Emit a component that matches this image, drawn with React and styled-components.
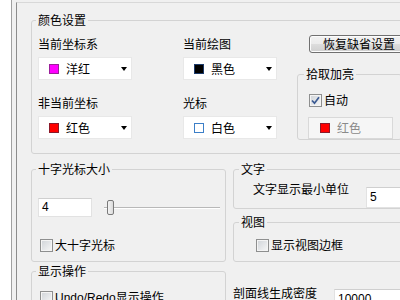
import React from 'react';
import styled, { createGlobalStyle } from 'styled-components';

const GlobalStyle = createGlobalStyle`
  html, body {
    margin: 0;
    padding: 0;
  }
  body {
    background: #f0f0f0;
    font-family: "Noto Sans CJK SC", "Liberation Sans", sans-serif;
    font-size: 12px;
    color: #000;
  }
`;

const Window = styled.div`
  display: flex;
  width: 400px;
  height: 300px;
  overflow: hidden;
  background: #f0f0f0;
`;

const SideList = styled.div`
  flex: none;
  width: 11px;
  background: #fff;
  border-right: 1px solid #a0a0a0;
`;

const Page = styled.div`
  flex: none;
  display: flex;
  flex-direction: column;
  width: 460px;
  margin: 2px 0 0 4px;
  padding: 10px 0 0 14px;
  border-left: 1px solid #8c8c8c;
  border-top: 1px solid #d8d8d8;
  box-sizing: border-box;
`;

const Group = styled.fieldset`
  flex: none;
  margin: 0;
  padding: 0;
  min-width: 0;
  box-sizing: border-box;
  width: ${(p) => p.$w}px;
  height: ${(p) => p.$h}px;
  border: 1px solid #d3d3d3;
  border-radius: 3px;
`;

const Legend = styled.legend`
  margin-left: ${(p) => p.$indent ?? 4}px;
  padding: 0 2px;
  font-size: 12px;
  line-height: 14px;
`;

const ColorBody = styled.div`
  display: flex;
  padding: 10px 0 0 6px;
`;

const Column = styled.div`
  display: flex;
  flex-direction: column;
  gap: 16px;
  width: 94px;
  margin-left: ${(p) => p.$offset || 0}px;
`;

const FieldLabel = styled.div`
  line-height: 14px;
  margin-bottom: 6px;
  white-space: nowrap;
`;

const Dropdown = styled.div`
  display: flex;
  align-items: center;
  box-sizing: border-box;
  width: ${(p) => p.$w || 94}px;
  height: ${(p) => p.$h || 23}px;
  padding-left: ${(p) => p.$pad || 10}px;
  margin-left: ${(p) => p.$shift || 0}px;
  background: ${(p) => (p.$disabled ? '#f6f6f6' : '#fff')};
  border: 1px solid ${(p) => (p.$disabled ? '#d9d9d9' : '#e8e8e8')};
  color: ${(p) => (p.$disabled ? '#8a8a8a' : '#000')};
`;

const Swatch = styled.span`
  flex: none;
  width: 10px;
  height: 10px;
  box-sizing: border-box;
  background: ${(p) => p.$fill};
  border: 1px solid ${(p) => p.$edge};
`;

const SwatchText = styled.span`
  margin-left: 7px;
  line-height: 14px;
`;

const Arrow = styled.span`
  margin-left: auto;
  margin-right: 4px;
  width: 0;
  height: 0;
  border-left: 3.5px solid transparent;
  border-right: 3.5px solid transparent;
  border-top: 4px solid #000;
`;

const PickColumn = styled.div`
  display: flex;
  flex-direction: column;
  margin-left: 20px;
`;

const Button = styled.div`
  box-sizing: border-box;
  width: 100px;
  height: 18px;
  margin: -2px 0 0 12px;
  padding-left: 13px;
  border: 1px solid #707070;
  border-radius: 3px;
  background: linear-gradient(#f2f2f2 0%, #ebebeb 50%, #dddddd 51%, #cfcfcf 100%);
  box-shadow: inset 0 0 0 1px #fcfcfc;
  line-height: 16px;
  white-space: nowrap;
`;

const PickBody = styled.div`
  display: flex;
  flex-direction: column;
  gap: 10px;
  padding: 12px 0 0 11px;
`;

const CheckRow = styled.label`
  display: flex;
  align-items: center;
  gap: 2px;
  padding-left: ${(p) => p.$pad || 0}px;
  margin-top: ${(p) => p.$top || 0}px;
  line-height: 14px;
  white-space: nowrap;
`;

const Box = styled.span`
  display: inline-flex;
  align-items: center;
  justify-content: center;
  flex: none;
  width: 13px;
  height: 13px;
  box-sizing: border-box;
  border: 1px solid #8e8f8f;
  background: linear-gradient(135deg, #cfd3d8, #f7f7f7);
  box-shadow: inset 0 0 0 1px #f4f4f4;
`;

const Latin = styled.span`
  font-family: "Liberation Sans", "Noto Sans CJK SC", sans-serif;
`;

const Row = styled.div`
  display: flex;
  margin-top: ${(p) => p.$top || 0}px;
`;

const SideColumn = styled.div`
  display: flex;
  flex-direction: column;
  gap: 6px;
  margin-left: 7px;
`;

const CrossBody = styled.div`
  display: flex;
  flex-direction: column;
  padding: 22px 0 0 6px;
`;

const SizeRow = styled.div`
  display: flex;
  align-items: center;
`;

const TextBox = styled.div`
  box-sizing: border-box;
  width: ${(p) => p.$w}px;
  height: ${(p) => p.$h}px;
  padding-left: 3px;
  background: #fff;
  border: 1px solid #e2e2e2;
  border-top-color: #cfcfcf;
  font-family: "Liberation Sans", sans-serif;
  font-size: 12px;
  line-height: ${(p) => p.$h - 2}px;
  flex: none;
`;

const Slider = styled.div`
  position: relative;
  width: 116px;
  height: 16px;
  margin-left: 12px;
`;

const Track = styled.div`
  position: absolute;
  left: 0;
  right: 0;
  top: 7px;
  border-top: 1px solid #b8b8b8;
  border-bottom: 1px solid #fff;
`;

const Thumb = styled.div`
  position: absolute;
  left: 3px;
  top: 0;
  width: 7px;
  height: 15px;
  box-sizing: border-box;
  border: 1px solid #7a7a7a;
  border-radius: 2px;
  background: linear-gradient(90deg, #f4f4f4, #dadada);
`;

const TextBody = styled.div`
  display: flex;
  align-items: flex-start;
  padding: 6px 0 0 19px;
`;

const InlineLabel = styled.span`
  line-height: 14px;
  white-space: nowrap;
`;

const ViewBody = styled.div`
  padding-top: 9px;
`;

const DensityPane = styled.div`
  display: flex;
  align-items: flex-start;
  margin-left: 7px;
  padding-top: 22px;
`;

const colors = {
  magenta: ['#ff00ff', '#9a209a'],
  black: ['#000000', '#1c3a6a'],
  red: ['#ff0000', '#8a1a2a'],
  white: ['#ffffff', '#3c7fc8'],
};

const ColorField = ({ label, color, text }) => (
  <div>
    <FieldLabel>{label}</FieldLabel>
    <Dropdown>
      <Swatch $fill={colors[color][0]} $edge={colors[color][1]} />
      <SwatchText>{text}</SwatchText>
      <Arrow />
    </Dropdown>
  </div>
);

const CheckBox = ({ checked }) => (
  <Box>
    {checked && (
      <svg width="9" height="9" viewBox="0 0 9 9">
        <path d="M1 4.5 L3.5 7.2 L8 1.2" fill="none" stroke="#3b5a92" strokeWidth="1.7" />
      </svg>
    )}
  </Box>
);

export default function App() {
  return (
    <Window>
      <GlobalStyle />
      <SideList />
      <Page>
        <Group $w={400} $h={141}>
          <Legend>颜色设置</Legend>
          <ColorBody>
            <Column>
              <ColorField label="当前坐标系" color="magenta" text="洋红" />
              <ColorField label="非当前坐标" color="red" text="红色" />
            </Column>
            <Column $offset={51}>
              <ColorField label="当前绘图" color="black" text="黑色" />
              <ColorField label="光标" color="white" text="白色" />
            </Column>
            <PickColumn>
              <Button>恢复缺省设置</Button>
              <Group $w={105} $h={73} style={{ marginTop: 14 }}>
                <Legend $indent={6}>拾取加亮</Legend>
                <PickBody>
                  <CheckRow>
                    <CheckBox checked />
                    自动
                  </CheckRow>
                  <Dropdown $w={85} $h={22} $pad={11} $shift={-1} $disabled>
                    <Swatch $fill="#ff0000" $edge="#8a1a2a" />
                    <SwatchText>红色</SwatchText>
                  </Dropdown>
                </PickBody>
              </Group>
            </PickColumn>
          </ColorBody>
        </Group>

        <Row $top={8}>
          <Group $w={195} $h={100}>
            <Legend>十字光标大小</Legend>
            <CrossBody>
              <SizeRow>
                <TextBox $w={54} $h={19}>4</TextBox>
                <Slider>
                  <Track />
                  <Thumb />
                </Slider>
              </SizeRow>
              <CheckRow $pad={2} $top={21}>
                <CheckBox />
                大十字光标
              </CheckRow>
            </CrossBody>
          </Group>
          <SideColumn>
            <Group $w={200} $h={47}>
              <Legend $indent={5}>文字</Legend>
              <TextBody>
                <InlineLabel>文字显示最小单位</InlineLabel>
                <TextBox $w={60} $h={21} style={{ marginLeft: 17, marginTop: 5 }}>5</TextBox>
              </TextBody>
            </Group>
            <Group $w={200} $h={47}>
              <Legend $indent={5}>视图</Legend>
              <ViewBody>
                <CheckRow $pad={22}>
                  <CheckBox />
                  显示视图边框
                </CheckRow>
              </ViewBody>
            </Group>
          </SideColumn>
        </Row>

        <Row $top={2}>
          <Group $w={195} $h={60}>
            <Legend>显示操作</Legend>
            <CheckRow $pad={8} $top={12}>
              <CheckBox />
              <span>
                <Latin>Undo/Redo</Latin>显示操作
              </span>
            </CheckRow>
          </Group>
          <DensityPane>
            <InlineLabel>剖面线生成密度</InlineLabel>
            <TextBox $w={70} $h={21} style={{ marginLeft: 17, marginTop: 3 }}>10000</TextBox>
          </DensityPane>
        </Row>
      </Page>
    </Window>
  );
}
